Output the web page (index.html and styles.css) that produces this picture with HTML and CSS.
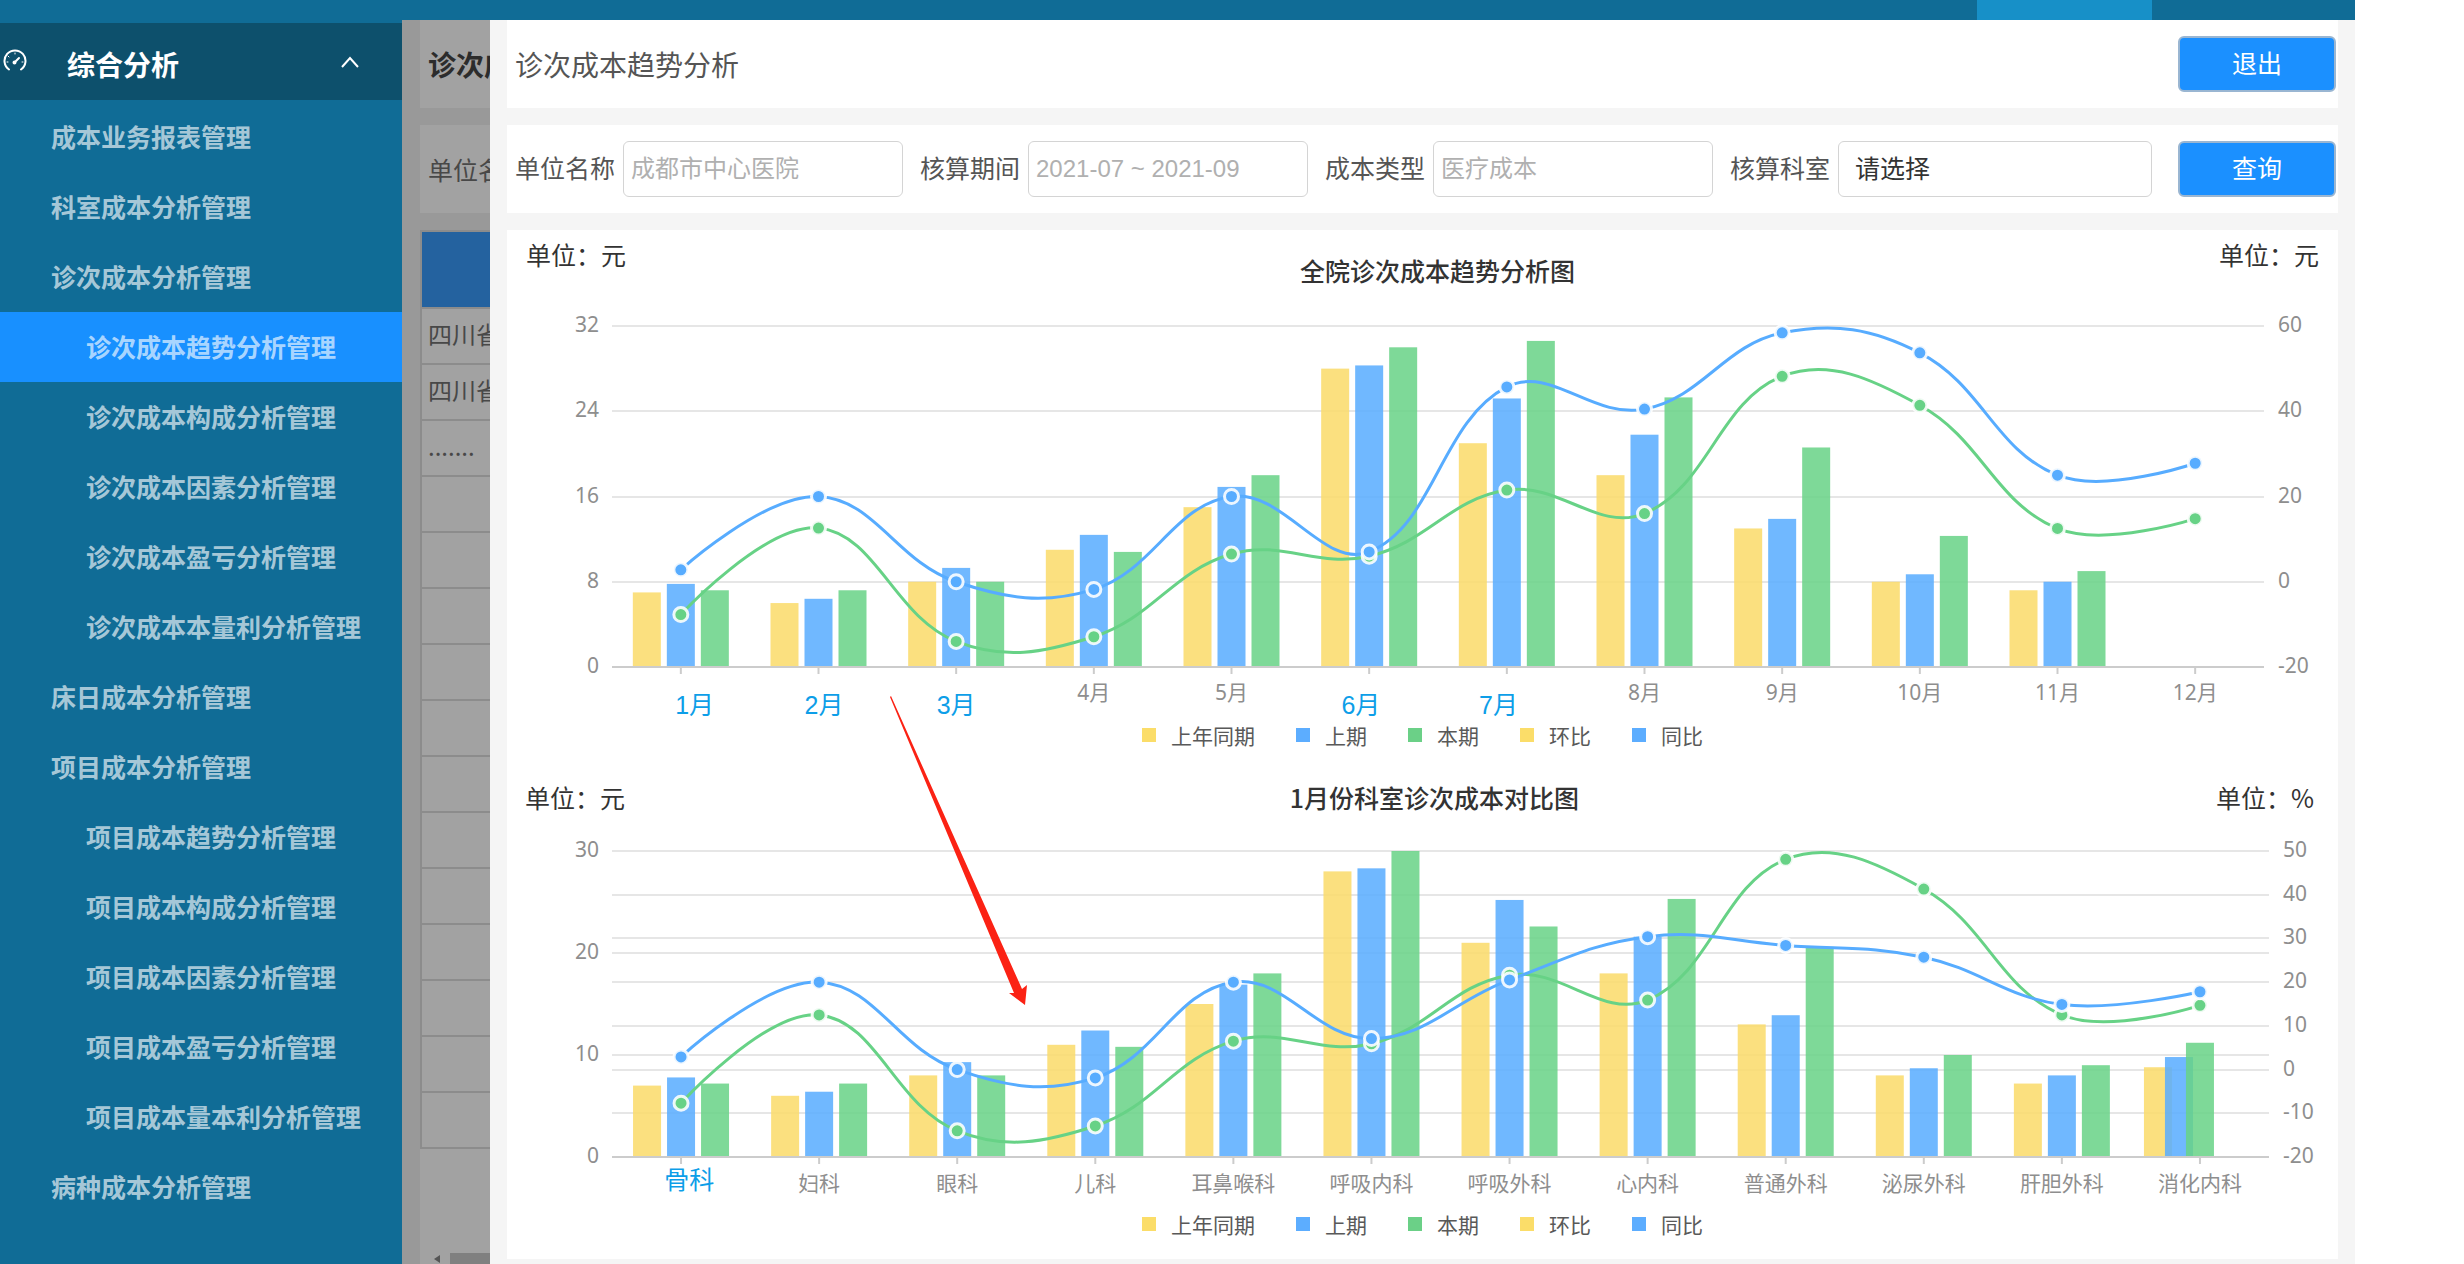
FILE: index.html
```html
<!DOCTYPE html>
<html lang="zh-CN">
<head>
  <meta charset="utf-8">
  <title>诊次成本趋势分析</title>
  <link rel="stylesheet" href="styles.css">
</head>
<body>
  <div class="app">
    <header class="topbar"><div class="topbar-tab"></div></header>
    <div class="layout">
      <nav class="sidebar">
        <button class="menu-head" type="button">
          <svg class="gauge" viewBox="0 0 24 24" width="24" height="24" fill="none" stroke="currentColor" stroke-width="2" stroke-linecap="round">
            <path d="M6 20.5A10.5 10.5 0 1 1 18 20.5"/>
            <path d="M11.5 13.5L16 9"/>
            <circle cx="11.5" cy="13.5" r="1"/>
            <path d="M12 4v1M5 7l1 1M4 13h1M19 13h1" stroke-width="1"/>
          </svg>
          <span class="menu-title">综合分析</span>
          <svg class="chevron" viewBox="0 0 18 12" width="18" height="12" fill="none" stroke="currentColor" stroke-width="2"><path d="M1 11L9 2l8 9"/></svg>
        </button>
        <a class="item" href="#">成本业务报表管理</a>
        <a class="item" href="#">科室成本分析管理</a>
        <a class="item" href="#">诊次成本分析管理</a>
        <a class="item sub active" href="#">诊次成本趋势分析管理</a>
        <a class="item sub" href="#">诊次成本构成分析管理</a>
        <a class="item sub" href="#">诊次成本因素分析管理</a>
        <a class="item sub" href="#">诊次成本盈亏分析管理</a>
        <a class="item sub" href="#">诊次成本本量利分析管理</a>
        <a class="item" href="#">床日成本分析管理</a>
        <a class="item" href="#">项目成本分析管理</a>
        <a class="item sub" href="#">项目成本趋势分析管理</a>
        <a class="item sub" href="#">项目成本构成分析管理</a>
        <a class="item sub" href="#">项目成本因素分析管理</a>
        <a class="item sub" href="#">项目成本盈亏分析管理</a>
        <a class="item sub" href="#">项目成本量本利分析管理</a>
        <a class="item" href="#">病种成本分析管理</a>
      </nav>

      <section class="behind">
        <div class="behind-card behind-title">诊次成</div>
        <div class="behind-card">单位名</div>
        <div class="behind-body">
          <table class="behind-table">
            <thead><tr><th></th></tr></thead>
            <tbody>
              <tr><td>四川省</td></tr>
              <tr><td>四川省</td></tr>
              <tr><td>.......</td></tr>
              <tr><td></td></tr><tr><td></td></tr><tr><td></td></tr>
              <tr><td></td></tr><tr><td></td></tr><tr><td></td></tr>
              <tr><td></td></tr><tr><td></td></tr><tr><td></td></tr>
              <tr><td></td></tr><tr><td></td></tr><tr><td></td></tr>
            </tbody>
          </table>
          <div class="scrollbar">
            <svg viewBox="0 0 10 10" width="10" height="10"><path d="M8 1v8L2 5z" fill="#555"/></svg>
            <div class="thumb"></div>
          </div>
        </div>
      </section>

      <main class="drawer">
        <div class="card title-bar">
          <h1>诊次成本趋势分析</h1>
          <button class="btn" type="button">退出</button>
        </div>
        <form class="card filters">
          <div class="field"><label for="org">单位名称</label><input id="org" placeholder="成都市中心医院"></div>
          <div class="field"><label for="period">核算期间</label><input id="period" placeholder="2021-07 ~ 2021-09"></div>
          <div class="field"><label for="type">成本类型</label><input id="type" placeholder="医疗成本"></div>
          <div class="field wide"><label for="dept">核算科室</label><select id="dept"><option>请选择</option></select></div>
          <button class="btn" type="button">查询</button>
        </form>
        <div class="card charts">
          <section class="chart">
            <div class="chart-head">
              <span class="unit">单位：元</span>
              <h2 class="lowered">全院诊次成本趋势分析图</h2>
              <span class="unit">单位：元</span>
            </div>
            <svg class="plot trend" id="trend"></svg>
            <ul class="legend">
              <li class="yellow">上年同期</li><li class="blue">上期</li><li class="green">本期</li><li class="yellow">环比</li><li class="blue">同比</li>
            </ul>
          </section>
          <section class="chart">
            <div class="chart-head compact">
              <span class="unit">单位：元</span>
              <h2>1月份科室诊次成本对比图</h2>
              <span class="unit">单位：%</span>
            </div>
            <svg class="plot compare" id="compare"></svg>
            <ul class="legend">
              <li class="yellow">上年同期</li><li class="blue">上期</li><li class="green">本期</li><li class="yellow">环比</li><li class="blue">同比</li>
            </ul>
          </section>
          <svg class="arrow" viewBox="0 0 140 314" width="140" height="314"><path d="M1 1L2 0L133 293L138 289L136 309L120 297L125 297Z" fill="#fb2214"/></svg>
        </div>
      </main>
    </div>
  </div>
  <script src="charts.js"></script>
</body>
</html>
```
FILE: styles.css
```css
* { box-sizing: border-box; }

body {
  margin: 0;
  background: #fff;
  font-family: "Noto Sans CJK SC", sans-serif;
  font-size: 25px;
  color: #333;
}

h1, h2, ul { margin: 0; padding: 0; }

button, input, select { font: inherit; }

.app { margin-right: 109px; }

.topbar {
  display: flex;
  justify-content: flex-end;
  height: 20px;
  padding-right: 203px;
  background: #106c96;
}

.topbar-tab { width: 175px; background: #1790c8; }

.layout { display: flex; min-height: calc(100vh - 20px); }

/* Sidebar */
.sidebar {
  flex: 0 0 402px;
  padding-top: 3px;
  background: #106c96;
}

.menu-head {
  display: flex;
  align-items: center;
  width: 100%;
  height: 77px;
  margin-bottom: 2px;
  padding: 0 43px 0 3px;
  border: 0;
  background: #0d506c;
  color: #fff;
}

.gauge { margin-bottom: 2px; }

.menu-title {
  flex: 1;
  padding: 4px 0 0 40px;
  font-size: 28px;
  font-weight: 700;
  text-align: left;
}

.item {
  display: block;
  padding: 0 0 2px 51px;
  line-height: 68px;
  font-weight: 700;
  color: rgba(255, 255, 255, 0.65);
  text-decoration: none;
  white-space: nowrap;
}

.item.sub { padding-left: 86px; }
.item.active { background: #1890ff; }

/* Dimmed page under the drawer */
.behind {
  display: flex;
  flex: 0 0 88px;
  flex-direction: column;
  gap: 17px;
  padding-left: 18px;
  background: #999;
  color: #484848;
  overflow: hidden;
  white-space: nowrap;
}

.behind-card {
  height: 88px;
  padding-left: 8px;
  background: #a2a2a2;
  line-height: 88px;
}

.behind-title { font-size: 28px; font-weight: 700; color: #2c2c2c; }

.behind-body {
  display: flex;
  flex: 1;
  flex-direction: column;
  justify-content: space-between;
  background: #a2a2a2;
}

.behind-table { width: 120px; border-collapse: collapse; }
.behind-table th { height: 77px; background: #24629f; }
.behind-table td, .behind-table th { border: 2px solid #8c8c8c; }
.behind-table td { height: 56px; padding: 0 6px 4px; font-size: 24px; line-height: 32px; }

.scrollbar { display: flex; align-items: center; height: 11px; padding-left: 12px; }
.thumb { flex: 1; align-self: stretch; margin-left: 8px; background: #808080; }

/* Drawer */
.drawer {
  display: flex;
  flex: 1;
  flex-direction: column;
  gap: 17px;
  min-width: 0;
  padding: 0 17px 4px;
  background: #f5f5f5;
}

.card { background: #fff; }

.title-bar, .filters {
  display: flex;
  align-items: center;
  height: 88px;
  padding: 0 2px 0 8px;
}

.title-bar { justify-content: space-between; }
.title-bar h1 { font-size: 28px; font-weight: 400; color: #555; }

.btn {
  flex: 0 0 158px;
  height: 56px;
  padding: 0 0 4px;
  border: 2px solid #9ab6d2;
  border-radius: 6px;
  background: #1b90ff;
  color: #fff;
  line-height: 48px;
}

.filters { gap: 17px; color: #555; }
.filters .btn { margin-left: 9px; }

.field { display: flex; flex: 388 1 0; align-items: center; gap: 8px; min-width: 0; }
.field.wide { flex-grow: 422; }
.field label { flex: none; padding-bottom: 4px; }

.field input, .field select {
  flex: 1;
  min-width: 0;
  width: 100%;
  height: 56px;
  padding: 0 7px;
  border: 1px solid #d4d4d4;
  border-radius: 6px;
  background: #fff;
  font-family: "Liberation Sans", "Noto Sans CJK SC", sans-serif;
  font-size: 24px;
}

.field input::placeholder { color: #b0b0b0; opacity: 1; }
.field select { padding: 0 16px; appearance: none; font-size: 25px; color: #333; }

/* Charts */
.charts {
  position: relative;
  display: flex;
  flex-direction: column;
  gap: 29px;
  padding: 6px 0 20px;
}

.chart-head {
  display: grid;
  grid-template-columns: 1fr auto 1fr;
  padding: 0 19px 2px;
  line-height: 36px;
}

.chart-head.compact { padding: 0 24px 2px 18px; }
.chart-head .unit:last-child { text-align: right; }
.chart-head h2 { padding-left: 30px; font-size: 25px; font-weight: 500; }
.chart-head .lowered { padding-top: 16px; }

.plot { display: block; width: 100%; }
.plot.trend { height: 430px; }
.plot.compare { height: 392px; }

.plot text { font-family: "Noto Sans", "Noto Sans CJK SC", sans-serif; font-size: 21px; fill: #8e8e8e; }
.plot .mark { font-family: "Liberation Sans", "Noto Sans CJK SC", sans-serif; font-size: 25px; fill: #0d9ee8; }
.plot .grid { stroke: #e6e6e6; stroke-width: 2; }
.plot .axis { stroke: #ccc; stroke-width: 2; }
.plot .tick { stroke: #ccc; stroke-width: 2; }

.legend {
  display: flex;
  justify-content: center;
  gap: 41px;
  list-style: none;
  font-size: 21px;
  line-height: 30px;
  color: #595959;
}

.legend li { display: flex; align-items: center; gap: 15px; }
.legend li::before { content: ""; width: 14px; height: 14px; background: currentColor; }
.legend .yellow::before { background: #fbdd69; }
.legend .blue::before { background: #5cadff; }
.legend .green::before { background: #6bd087; }

.arrow { position: absolute; left: 382px; top: 466px; }
```
FILE: charts.js
```js
const NS = 'http://www.w3.org/2000/svg';
const COLORS = { yellow: '#fadb69', blue: '#57acff', green: '#67d286' };

const trend = {
  id: 'trend', top: 36, height: 341, left: 105, right: 74, labelY: 410, markY: 424,
  max: 32, ticks: [0, 8, 16, 24, 32],
  min2: -20, max2: 60, ticks2: [-20, 0, 20, 40, 60],
  names: ['', '', '', '4月', '5月', '', '', '8月', '9月', '10月', '11月', '12月'],
  marks: [['1月', 0.6], ['2月', 1.54], ['3月', 2.5], ['6月', 5.44], ['7月', 6.44]],
  bars: [[7, 7.8, 7.2], [6, 6.4, 7.2], [8, 9.3, 8], [11, 12.4, 10.8], [15, 16.9, 18], [28, 28.3, 30],
    [21, 25.2, 30.6], [18, 21.8, 25.3], [13, 13.9, 20.6], [8, 8.7, 12.3], [7.2, 8, 9], []],
  green: [-7.7, 12.6, -14, -12.9, 6.5, 6, 21.5, 16, 48.2, 41.4, 12.5, 14.8],
  blue: [2.8, 20, 0, -1.8, 20, 7, 45.7, 40.5, 58.4, 53.7, 25, 27.8],
};

const compare = {
  id: 'compare', top: 34, height: 306, left: 105, right: 69, labelY: 374, markY: 372,
  max: 30, ticks: [0, 10, 20, 30],
  min2: -20, max2: 50, ticks2: [-20, -10, 0, 10, 20, 30, 40, 50],
  names: ['', '妇科', '眼科', '儿科', '耳鼻喉科', '呼吸内科', '呼吸外科', '心内科', '普通外科', '泌尿外科', '肝胆外科', '消化内科'],
  marks: [['骨科', 0.56]],
  bars: [[7, 7.8, 7.2], [6, 6.4, 7.2], [8, 9.3, 8], [11, 12.4, 10.8], [15, 16.9, 18], [28, 28.3, 30],
    [21, 25.2, 22.6], [18, 21.6, 25.3], [13, 13.9, 20.6], [8, 8.7, 10], [7.2, 8, 9], [8.8, 9.8, 11.2]],
  tight: 11,
  green: [-7.7, 12.5, -14, -12.9, 6.5, 5.9, 21.6, 15.9, 48.1, 41.3, 12.5, 14.7],
  blue: [2.9, 20, 0, -1.9, 20, 7.1, 20.5, 30.4, 28.4, 25.7, 14.9, 17.8],
};

function add(svg, name, attrs, text) {
  const node = document.createElementNS(NS, name);
  for (const key in attrs) node.setAttribute(key, attrs[key]);
  if (text !== undefined) node.textContent = text;
  svg.appendChild(node);
}

// Smooth curve: control points follow the neighbours, weighted by distance.
function curve(points) {
  const dist = (a, b) => Math.hypot(a[0] - b[0], a[1] - b[1]);
  const handles = points.map((p, i) => {
    const a = points[i - 1], b = points[i + 1];
    if (!a || !b) return [p, p];
    const d0 = dist(p, a), d1 = dist(p, b), sum = d0 + d1;
    const v = [(b[0] - a[0]) * 0.4, (b[1] - a[1]) * 0.4];
    return [
      [p[0] - v[0] * d0 / sum, p[1] - v[1] * d0 / sum],
      [p[0] + v[0] * d1 / sum, p[1] + v[1] * d1 / sum],
    ];
  });
  let d = 'M' + points[0];
  for (let i = 1; i < points.length; i++) {
    d += 'C' + handles[i - 1][1] + ' ' + handles[i][0] + ' ' + points[i];
  }
  return d;
}

function draw(c) {
  const svg = document.getElementById(c.id);
  svg.replaceChildren();
  const x1 = c.left, x2 = svg.clientWidth - c.right, bottom = c.top + c.height;
  const band = (x2 - x1) / c.names.length;
  const yLeft = v => bottom - v / c.max * c.height;
  const yRight = v => bottom - (v - c.min2) / (c.max2 - c.min2) * c.height;
  const center = i => x1 + band * (i + 0.5);
  const rule = (y, cls) => add(svg, 'line', { x1, x2, y1: Math.round(y), y2: Math.round(y), class: cls });

  const rows = new Set([...c.ticks.map(yLeft), ...c.ticks2.map(yRight)].map(Math.round));
  rows.forEach(y => { if (y !== bottom) rule(y, 'grid'); });
  c.ticks.forEach(v => add(svg, 'text', { x: x1 - 13, y: yLeft(v) + 6, 'text-anchor': 'end' }, v));
  c.ticks2.forEach(v => add(svg, 'text', { x: x2 + 14, y: yRight(v) + 6 }, v));

  const fills = [COLORS.yellow, COLORS.blue, COLORS.green];
  c.bars.forEach((group, i) => group.forEach((v, k) => {
    const x = i === c.tight ? center(i) - 56 + k * 21 : center(i) - 48 + k * 34;
    add(svg, 'rect', { x, y: yLeft(v), width: 28, height: bottom - yLeft(v), fill: fills[k], opacity: 0.85 });
  }));
  rule(bottom, 'axis');

  c.names.forEach((name, i) => {
    add(svg, 'line', { x1: center(i), x2: center(i), y1: bottom, y2: bottom + 7, class: 'tick' });
    if (name) add(svg, 'text', { x: center(i), y: c.labelY, 'text-anchor': 'middle' }, name);
  });
  c.marks.forEach(([name, at]) =>
    add(svg, 'text', { x: x1 + band * at, y: c.markY, 'text-anchor': 'middle', class: 'mark' }, name));

  const lines = ['green', 'blue'].map(key => [key, c[key].map((v, i) => [center(i), yRight(v)])]);
  lines.forEach(([key, points]) =>
    add(svg, 'path', { d: curve(points), fill: 'none', stroke: COLORS[key], 'stroke-width': 3 }));
  lines.forEach(([key, points]) => points.forEach(([cx, cy]) =>
    add(svg, 'circle', { cx, cy, r: 7, fill: COLORS[key], stroke: '#fff', 'stroke-opacity': 0.88, 'stroke-width': 3 })));
}

function drawAll() { draw(trend); draw(compare); }
drawAll();
window.addEventListener('resize', drawAll);
```
